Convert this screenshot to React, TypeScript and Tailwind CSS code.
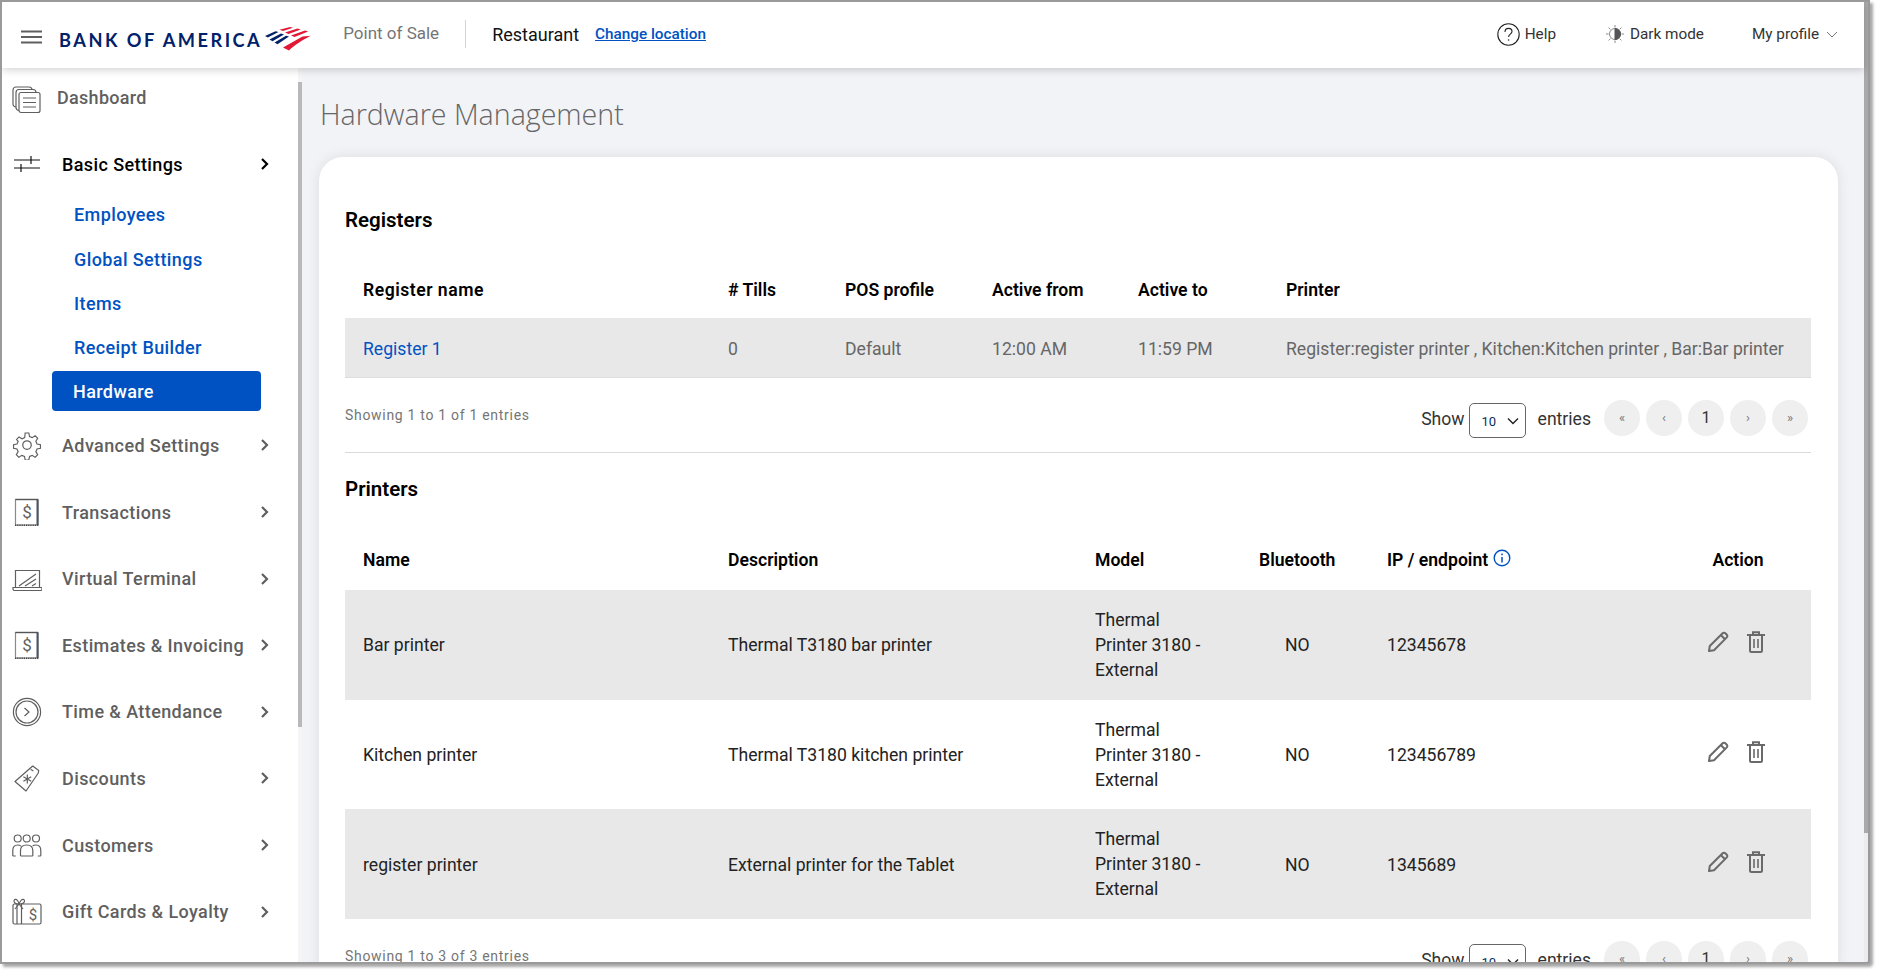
import React from "react";

const NAVY = "#012169";

function Chevron({ dark }: { dark?: boolean }) {
  return (
    <svg width="10" height="14" viewBox="0 0 10 14" fill="none" stroke={dark ? "#000" : "#5f5f5f"} strokeWidth="2.2">
      <path d="M2 2l5 5-5 5" />
    </svg>
  );
}

function Flag() {
  return (
    <svg width="46" height="24" viewBox="0 0 46 24" className="ml-[3px] mb-[4px]">
      <g fill="#012169">
        <path d="M0 9L10.500 4.200l3 .8L2.800 10.600z" />
        <path d="M4.500 12.500L16 6.600l3 .8L7.500 14.200z" />
        <path d="M9.500 15.500L21 8.800l3 .8L12.500 17.200z" />
      </g>
      <g fill="#e31837">
        <path d="M14.500 2.800L25 0l3 .8L18 4z" />
        <path d="M20 5.600L32.500 1.600l3.200 .9L23.500 7z" />
        <path d="M26 8.600L40 3.600l3.200 1L29.500 10z" />
        <path d="M18 20.500L37.500 9.500l8.300-.8C37 13 29 18.500 24 23.400z" />
      </g>
    </svg>
  );
}

const S = { width: 30, height: 30, fill: "none", stroke: "#5f5f5f", strokeWidth: 1.2 } as const;

function DashIcon() {
  return (
    <svg {...S} viewBox="0 0 30 30">
      <rect x="1" y="2" width="19" height="20" rx="3" />
      <rect x="4" y="4.500" width="20" height="21" rx="3" fill="#fff" />
      <rect x="7" y="7.500" width="21" height="20" rx="2" fill="#fff" />
      <path d="M11 13h13M11 17.500h13M11 22h13" />
    </svg>
  );
}
function SlidersIcon() {
  return (
    <svg {...S} stroke="#111" viewBox="0 0 30 30">
      <path d="M2 11h26M2 19h26M19 7v8M9 15v8" />
    </svg>
  );
}
function GearIcon() {
  return (
    <svg {...S} viewBox="0 0 24 24" strokeWidth={1}>
      <circle cx="12" cy="12" r="3.400" />
      <path d="M10.400 1.600h3.200l.6 3 2.300 1 2.600-1.600 2.200 2.200-1.600 2.600 1 2.300 3 .6v3.200l-3 .6-1 2.300 1.600 2.600-2.200 2.200-2.600-1.600-2.300 1-.6 3h-3.200l-.6-3-2.300-1-2.600 1.600-2.200-2.200 1.600-2.600-1-2.300-3-.6v-3.200l3-.6 1-2.300L2.900 7.200l2.200-2.200 2.600 1.600 2.300-1z" transform="translate(12 12) scale(.92) translate(-12 -12)" />
    </svg>
  );
}
function ReceiptIcon() {
  return (
    <svg {...S} viewBox="0 0 30 30">
      <rect x="3.500" y="2.500" width="22.500" height="25.500" fill="#fff" stroke="#8a8a8a" />
      <path d="M3.500 2.500H26" stroke="#555" strokeWidth="1.300" />
      <path d="M25.500 2.500v25.500" stroke="#4a5563" strokeWidth="2" />
      <path d="M3 28.200h24" stroke="#444" strokeWidth="1.400" strokeDasharray="1.200 1" />
      <text x="15" y="21" textAnchor="middle" fontSize="17" fontFamily="Roboto, sans-serif" fill="#5f5f5f" stroke="none">$</text>
    </svg>
  );
}
function LaptopIcon() {
  return (
    <svg {...S} viewBox="0 0 30 30">
      <path d="M3.500 23V6.500h24V23" />
      <path d="M1 23.500h29v1.500a1.500 1.500 0 0 1-1.500 1.500h-26A1.500 1.500 0 0 1 1 25z" />
      <path d="M7 22L24 10M13 22l11-7M20 22l4-2.600" />
    </svg>
  );
}
function ClockIcon() {
  return (
    <svg {...S} viewBox="0 0 30 30">
      <circle cx="15" cy="15" r="13.600" />
      <circle cx="15" cy="15" r="11" />
      <path d="M12.500 11l4.500 4-4.500 4" />
    </svg>
  );
}
function TagIcon() {
  return (
    <svg {...S} viewBox="0 0 30 30">
      <path d="M20.700 3l6 4.500-.4 2.500L14 28 3 18.500z" strokeLinejoin="round" />
      <path d="M15.300 11.500v9M11.400 13.700l7.800 4.500M11.400 18.200l7.800-4.500" />
      <path d="M18.700 6.300l2.600 1.700" />
    </svg>
  );
}
function PeopleIcon() {
  return (
    <svg {...S} viewBox="0 0 30 30">
      <circle cx="5.700" cy="8.500" r="3.500" />
      <circle cx="14.700" cy="8.500" r="3.500" />
      <circle cx="24" cy="8.500" r="3.500" />
      <path d="M.8 26v-5.500c0-3.200 1.800-5.500 4.900-5.500 1.500 0 2.500.4 3.300 1.100M28.800 26v-5.500c0-3.200-1.800-5.500-4.800-5.500-1.500 0-2.600.4-3.400 1.100" />
      <path d="M8.500 26v-5.500c0-3.400 2.500-5.500 6.200-5.500s6.100 2.100 6.100 5.500V26" />
      <path d="M.8 26h3M8.500 26h12.300M25.800 26h3" />
    </svg>
  );
}
function GiftIcon() {
  return (
    <svg {...S} viewBox="0 0 30 30">
      <rect x="1" y="7" width="28" height="20" rx="1.500" />
      <path d="M5 7v20M9.500 7v20" />
      <path d="M7 7C3.500 7 2 5.500 2 4s2-2.500 3.500-.5S7 7 7 7zm0 0c3.500 0 5.500-1.500 5.500-3s-2-2.500-3.500-.5S7 7 7 7z" fill="#fff" />
      <path d="M7 7L3 12M7 7l4 5" />
      <text x="21" y="22.500" textAnchor="middle" fontSize="15" fontFamily="Roboto, sans-serif" fill="#5f5f5f" stroke="none">$</text>
    </svg>
  );
}

function NavRow({ icon, label, active }: { icon: React.ReactNode; label: string; active?: boolean }) {
  return (
    <div className="h-[66.6px] flex items-center pl-[10px] pr-[28px] shrink-0">
      <span className="w-[30px] h-[30px] shrink-0">{icon}</span>
      <span className={`ml-[20px] flex-1 text-[18px] font-medium tracking-[0.4px] whitespace-nowrap ${active ? "text-black" : "text-[#5f5f5f]"}`}>
        {label}
      </span>
      <Chevron dark={active} />
    </div>
  );
}

function SubItem({ label }: { label: string }) {
  return (
    <div className="h-[44.4px] flex items-center pl-[72px] text-[18px] font-medium tracking-[0.4px] text-[#0052c2]">{label}</div>
  );
}

function Sidebar() {
  return (
    <aside className="w-[300px] shrink-0 bg-white flex relative z-10">
      <nav className="flex-1 flex flex-col overflow-hidden pt-[14px]">
        <div className="flex items-start pl-[10px] h-[49px] shrink-0">
          <span className="w-[30px] h-[30px] shrink-0 mt-[3px]"><DashIcon /></span>
          <span className="ml-[15px] mt-[1px] text-[18px] font-medium tracking-[0.3px] text-[#5f5f5f] leading-[30px]">Dashboard</span>
        </div>
        <NavRow icon={<SlidersIcon />} label="Basic Settings" active />
        <div className="-mt-[5px] flex flex-col shrink-0">
          <SubItem label="Employees" />
          <SubItem label="Global Settings" />
          <SubItem label="Items" />
          <SubItem label="Receipt Builder" />
          <div className="mt-[1px] ml-[50px] w-[209px] h-[40px] rounded-[4px] bg-[#0052c2] flex items-center pl-[21px] text-[18px] font-medium tracking-[0.4px] text-white">Hardware</div>
        </div>
        <div className="h-[1px] shrink-0" />
        <NavRow icon={<GearIcon />} label="Advanced Settings" />
        <NavRow icon={<ReceiptIcon />} label="Transactions" />
        <NavRow icon={<LaptopIcon />} label="Virtual Terminal" />
        <NavRow icon={<ReceiptIcon />} label="Estimates & Invoicing" />
        <NavRow icon={<ClockIcon />} label="Time & Attendance" />
        <NavRow icon={<TagIcon />} label="Discounts" />
        <NavRow icon={<PeopleIcon />} label="Customers" />
        <NavRow icon={<GiftIcon />} label="Gift Cards & Loyalty" />
      </nav>
      <div className="w-[4px] shrink-0 pt-[14px] bg-[#f5f5f6]">
        <div className="h-[645px] bg-[#b9b9bb]" />
      </div>
    </aside>
  );
}

function PageControls() {
  return (
    <div className="flex items-start h-[36px] text-[17.6px] text-[#333] leading-[36px]">
      <span className="mt-[1px]">Show</span>
      <div className="mt-[3px] ml-[4px] w-[57px] h-[35px] border border-[#666] rounded-[5px] flex items-center justify-between pl-[12px] pr-[6px] text-[13px] text-[#0a2f5c]">
        <span className="pt-[2px]">10</span>
        <svg width="12" height="8" viewBox="0 0 12 8" fill="none" stroke="#222" strokeWidth="1.400"><path d="M1 1.500l5 5 5-5" /></svg>
      </div>
      <span className="mt-[1px] ml-[12px] mr-[13px]">entries</span>
      <div className="flex gap-[6px]">
        {["«", "‹", "1", "›", "»"].map((t) => (
          <span key={t} className={`w-[36px] h-[36px] rounded-full bg-[#efefef] flex items-center justify-center ${t === "1" ? "text-[16px] text-[#333]" : "text-[13px] text-[#777]"}`}>{t}</span>
        ))}
      </div>
    </div>
  );
}

function Footer({ text }: { text: string }) {
  return (
    <div className="flex items-start justify-between pr-[3px] h-[36px]">
      <span className="-mt-[3px] leading-[36px] text-[14px] tracking-[0.7px] text-[#757575]">{text}</span>
      <PageControls />
    </div>
  );
}

function Pencil() {
  return (
    <svg width="22" height="22" viewBox="0 0 22 22" fill="none" stroke="#6a6a6a" strokeWidth="2" strokeLinejoin="round">
      <path d="M2 20l.8-5L15.600 2.200a1.900 1.900 0 0 1 2.700 0l1.500 1.500a1.900 1.900 0 0 1 0 2.700L7 19.200z" />
      <path d="M13.800 4l4.200 4.200" />
    </svg>
  );
}
function Trash() {
  return (
    <svg width="18" height="22" viewBox="0 0 18 22" fill="none" stroke="#6a6a6a" strokeWidth="2">
      <path d="M0 4h18" />
      <path d="M6 3V1.200h6V3" />
      <path d="M3 4.500V19.500a1.500 1.500 0 0 0 1.500 1.500h9a1.500 1.500 0 0 0 1.500-1.500V4.500" />
      <path d="M7 8v9M11 8v9" strokeWidth="1.600" />
    </svg>
  );
}

const printers = [
  ["Bar printer", "Thermal T3180 bar printer", "12345678"],
  ["Kitchen printer", "Thermal T3180 kitchen printer", "123456789"],
  ["register printer", "External printer for the Tablet", "1345689"],
];

function Card() {
  return (
    <section className="bg-white rounded-[24px] shadow-[0_0_14px_rgba(0,0,0,0.09)] pl-[26px] pr-[27px] pt-[46px] pb-[10px] text-[17.6px]">
      <h2 className="text-[20.5px] font-semibold text-black leading-[34px]">Registers</h2>
      <div className="grid grid-cols-[383px_117px_147px_146px_148px_1fr] mt-[26px]">
        {["Register name", "# Tills", "POS profile", "Active from", "Active to", "Printer"].map((h, i) => (
          <div key={h} className={`h-[55px] flex items-center font-semibold text-black ${i === 0 ? "pl-[18px] tracking-[0.5px]" : ""}`}>{h}</div>
        ))}
      </div>
      <div className="grid grid-cols-[383px_117px_147px_146px_148px_1fr] bg-[#e8e8e8] h-[60px] pt-[3px] border-b border-[#dcdcdc] items-center text-[#666]">
        <div className="pl-[18px] text-[#0052c2]">Register 1</div>
        <div>0</div>
        <div>Default</div>
        <div>12:00 AM</div>
        <div>11:59 PM</div>
        <div className="whitespace-nowrap">Register:register printer , Kitchen:Kitchen printer , Bar:Bar printer</div>
      </div>
      <div className="mt-[22px]"><Footer text="Showing 1 to 1 of 1 entries" /></div>
      <div className="h-[1px] bg-[#d9d9d9] mt-[16px]" />
      <h2 className="text-[20.5px] font-semibold text-black leading-[34px] mt-[19px]">Printers</h2>
      <div className="grid grid-cols-[383px_367px_164px_128px_1fr_146px] mt-[24px]">
        {["Name", "Description", "Model", "Bluetooth"].map((h, i) => (
          <div key={h} className={`h-[60px] flex items-center font-semibold text-black ${i === 0 ? "pl-[18px]" : ""}`}>{h}</div>
        ))}
        <div className="h-[60px] flex items-center font-semibold text-black">
          IP / endpoint
          <svg className="ml-[5px] mb-[5px]" width="18" height="18" viewBox="0 0 18 18" fill="none" stroke="#0052c2" strokeWidth="1.400">
            <circle cx="9" cy="9" r="7.800" />
            <path d="M9 8v5.500M9 4.500v1.800" strokeWidth="1.500" />
          </svg>
        </div>
        <div className="h-[60px] flex items-center justify-center font-semibold text-black">Action</div>
      </div>
      {printers.map((p, i) => (
        <div key={p[0]} className={`grid grid-cols-[383px_367px_164px_128px_1fr_146px] h-[109.7px] pt-[1px] items-center text-[#222] ${i % 2 === 0 ? "bg-[#e8e8e8]" : "bg-white"}`}>
          <div className="pl-[18px]">{p[0]}</div>
          <div>{p[1]}</div>
          <div className="leading-[25px]">Thermal<br />Printer 3180 -<br />External</div>
          <div className="pl-[26px]">NO</div>
          <div>{p[2]}</div>
          <div className="flex items-center justify-center gap-[18px] -mt-[6px] pr-[4px]"><Pencil /><Trash /></div>
        </div>
      ))}
      <div className="mt-[22px]"><Footer text="Showing 1 to 3 of 3 entries" /></div>
    </section>
  );
}

export default function App() {
  return (
    <div className="w-[1879px] h-[972px] bg-white overflow-hidden" style={{ fontFamily: "Roboto, sans-serif" }}>
      <div className="w-[1870px] h-[964px] border-2 border-[#9a9a9a] rounded-br-[4px] shadow-[3px_3px_3px_rgba(0,0,0,0.35)] flex overflow-hidden bg-[#f2f3f7]">
        <div className="flex-1 min-w-0 flex flex-col">
          <header className="h-[66px] shrink-0 bg-white flex items-center pb-[2px] shadow-[0_2px_8px_rgba(0,0,0,0.18)] relative z-20">
            <svg className="ml-[19px] mt-[6px]" width="21" height="14" viewBox="0 0 21 14" stroke="#5f5f5f" strokeWidth="2"><path d="M0 1.500h21M0 7h21M0 12.500h21" /></svg>
            <div className="ml-[17px] flex items-center mt-[13px]">
              <span className="text-[18.2px] font-bold tracking-[2.500px] whitespace-nowrap" style={{ fontFamily: "Lato, sans-serif", color: NAVY }}>BANK OF AMERICA</span>
              <Flag />
            </div>
            <span className="ml-[32px] text-[17px] text-[#757575]">Point of Sale</span>
            <div className="ml-[26px] w-px h-[28px] bg-[#d5d5d5]" />
            <span className="ml-[26px] text-[18px] text-[#111]">Restaurant</span>
            <span className="ml-[16px] text-[15.3px] font-medium text-[#0052c2] underline">Change location</span>
            <div className="flex-1" />
            <svg width="23" height="23" viewBox="0 0 23 23" fill="none" stroke="#222" strokeWidth="1.100">
              <circle cx="11.500" cy="11.500" r="10.700" />
              <path d="M8 9c0-2.200 1.600-3.600 3.600-3.600s3.400 1.300 3.400 3.200c0 2.600-3.400 2.600-3.400 5.400" />
              <circle cx="11.600" cy="17" r=".8" fill="#222" stroke="none" />
            </svg>
            <span className="ml-[5px] text-[15.3px] text-[#333]">Help</span>
            <svg className="ml-[49px]" width="20" height="20" viewBox="0 0 20 20" fill="none" stroke="#888" strokeWidth="1">
              <path d="M10 1v2.500M10 16.500V19M1 10h2.500M16.500 10H19M3.600 3.600l1.800 1.800M14.600 14.600l1.800 1.800M3.600 16.400l1.800-1.800M14.600 5.400l1.800-1.800" />
              <circle cx="10" cy="10" r="5.500" fill="#fff" />
              <path d="M10 4.500a5.500 5.500 0 0 1 0 11z" fill="#555" stroke="#555" />
            </svg>
            <span className="ml-[5px] text-[15.3px] text-[#333]">Dark mode</span>
            <span className="ml-[48px] text-[15.3px] text-[#333]">My profile</span>
            <svg className="ml-[7px] mr-[26px]" width="12" height="7" viewBox="0 0 12 7" fill="none" stroke="#777" strokeWidth="1"><path d="M1 1l5 5 5-5" /></svg>
          </header>
          <div className="flex-1 min-h-0 flex">
            <Sidebar />
            <main className="flex-1 min-w-0 overflow-hidden pl-[17px] pr-[26px]">
              <h1 className="mt-[24px] h-[65px] pl-[1px] text-[28.6px] font-light leading-[44px] text-[#666]" style={{ fontFamily: '"Open Sans", sans-serif' }}>Hardware Management</h1>
              <Card />
            </main>
          </div>
        </div>
        <div className="w-[4px] shrink-0 bg-[#ececef]">
          <div className="h-[831px] bg-[#a9a9a9]" />
        </div>
      </div>
    </div>
  );
}
